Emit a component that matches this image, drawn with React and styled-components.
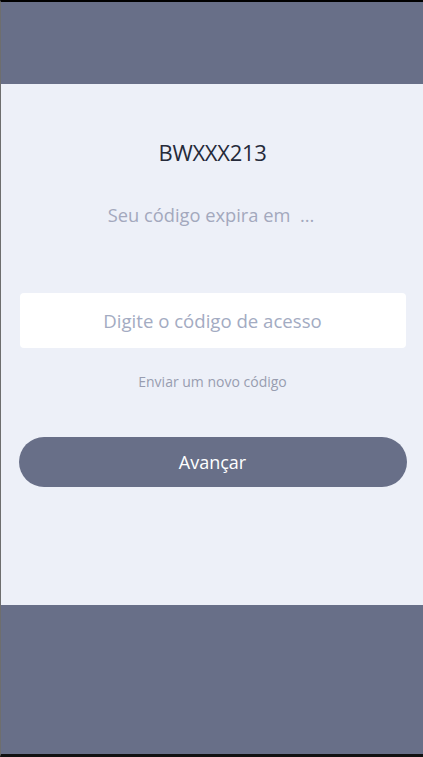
import React from 'react';
import styled, { createGlobalStyle } from 'styled-components';

const GlobalStyle = createGlobalStyle`
  * {
    box-sizing: border-box;
  }
  body {
    margin: 0;
    font-family: "Open Sans", "Noto Sans", sans-serif;
  }
`;

const Screen = styled.div`
  width: 423px;
  height: 757px;
  display: flex;
  flex-direction: column;
  border-top: 2px solid #000000;
  border-left: 1px solid #6e6e6e;
  border-bottom: 3px solid #111111;
  background-color: #686f88;
`;

const Band = styled.div`
  height: ${(p) => p.height}px;
  flex-shrink: 0;
  background-color: #686f88;
`;

const Main = styled.main`
  height: 521px;
  flex-shrink: 0;
  background-color: #edf0f8;
  display: flex;
  flex-direction: column;
  align-items: center;
  padding: 0 17px 0 18px;
`;

const Code = styled.h1`
  margin: 54px 0 0;
  font-size: 22px;
  font-weight: 400;
  line-height: 28px;
  color: #252a3a;
  letter-spacing: -0.3px;
`;

const Expire = styled.p`
  margin: 37px 0 0 -3px;
  font-size: 18.3px;
  line-height: 24px;
  color: #a3a8bd;
`;

const Input = styled.input`
  margin-top: 66px;
  width: 386px;
  height: 55px;
  border: none;
  border-radius: 4px;
  background-color: #ffffff;
  text-align: center;
  font-family: inherit;
  font-size: 18.6px;
  color: #252a3a;
  outline: none;

  &::placeholder {
    color: #a3abc2;
  }
`;

const LinkButton = styled.button`
  margin-top: 24px;
  border: none;
  background: transparent;
  padding: 0;
  font-family: inherit;
  font-size: 14px;
  line-height: 20px;
  color: #989db0;
  cursor: pointer;
`;

const Primary = styled.button`
  margin-top: 45px;
  width: 388px;
  height: 50px;
  border: none;
  border-radius: 25px;
  background-color: #686f88;
  color: #ffffff;
  font-family: inherit;
  font-size: 18px;
  cursor: pointer;
`;

export default function App() {
  return (
    <>
      <GlobalStyle />
      <Screen>
        <Band height={82} />
        <Main>
          <Code>BWXXX213</Code>
          <Expire>Seu código expira em&nbsp; ...</Expire>
          <Input placeholder="Digite o código de acesso" />
          <LinkButton>Enviar um novo código</LinkButton>
          <Primary>Avançar</Primary>
        </Main>
      </Screen>
    </>
  );
}
